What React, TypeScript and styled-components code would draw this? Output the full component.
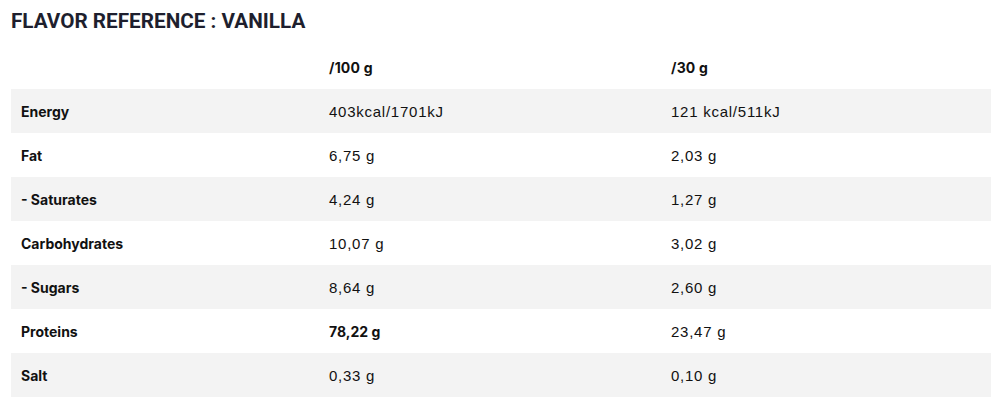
import React from "react";
import styled, { createGlobalStyle } from "styled-components";

const Global = createGlobalStyle`
  body { margin: 0; background: #fff; font-family: Inter, "Liberation Sans", sans-serif; }
`;

const Wrap = styled.div`
  padding: 9px 8px 0 11px;
`;

const Title = styled.h2`
  margin: 0 0 12px;
  font-family: Roboto, "Liberation Sans", sans-serif;
  font-weight: 700;
  font-size: 20.7px;
  line-height: 24px;
  color: #1e1f2e;
`;

const Table = styled.table`
  width: 980px;
  border-collapse: collapse;
  table-layout: fixed;
  font-size: 14px;
  color: #111;
`;

const Row = styled.tr<{ $striped?: boolean }>`
  height: 44px;
  background: ${(p) => (p.$striped ? "#f3f3f3" : "#fff")};
`;

const Cell = styled.td<{ $bold?: boolean }>`
  padding: 0 10px;
  vertical-align: middle;
  ${(p) =>
    p.$bold
      ? "font-weight: 700;"
      : `font-family: "Liberation Sans", Arial, sans-serif; font-size: 15px; letter-spacing: 0.75px; font-weight: 400;`}
`;

const HeadCell = styled.th`
  padding: 0 10px;
  font-weight: 700;
  text-align: left;
  letter-spacing: 0.2px;
`;

const rows: [string, string, string, boolean?][] = [
  ["Energy", "403kcal/1701kJ", "121 kcal/511kJ"],
  ["Fat", "6,75 g", "2,03 g"],
  ["- Saturates", "4,24 g", "1,27 g"],
  ["Carbohydrates", "10,07 g", "3,02 g"],
  ["- Sugars", "8,64 g", "2,60 g"],
  ["Proteins", "78,22 g", "23,47 g", true],
  ["Salt", "0,33 g", "0,10 g"],
];

export default function App() {
  return (
    <>
      <Global />
      <Wrap>
        <Title>FLAVOR REFERENCE : VANILLA</Title>
        <Table>
          <colgroup>
            <col style={{ width: 308 }} />
            <col style={{ width: 342 }} />
            <col />
          </colgroup>
          <thead>
            <Row>
              <HeadCell></HeadCell>
              <HeadCell>/100 g</HeadCell>
              <HeadCell>/30 g</HeadCell>
            </Row>
          </thead>
          <tbody>
            {rows.map(([label, a, b, bold], i) => (
              <Row key={label} $striped={i % 2 === 0}>
                <Cell $bold>{label}</Cell>
                <Cell $bold={bold}>{a}</Cell>
                <Cell>{b}</Cell>
              </Row>
            ))}
          </tbody>
        </Table>
      </Wrap>
    </>
  );
}
